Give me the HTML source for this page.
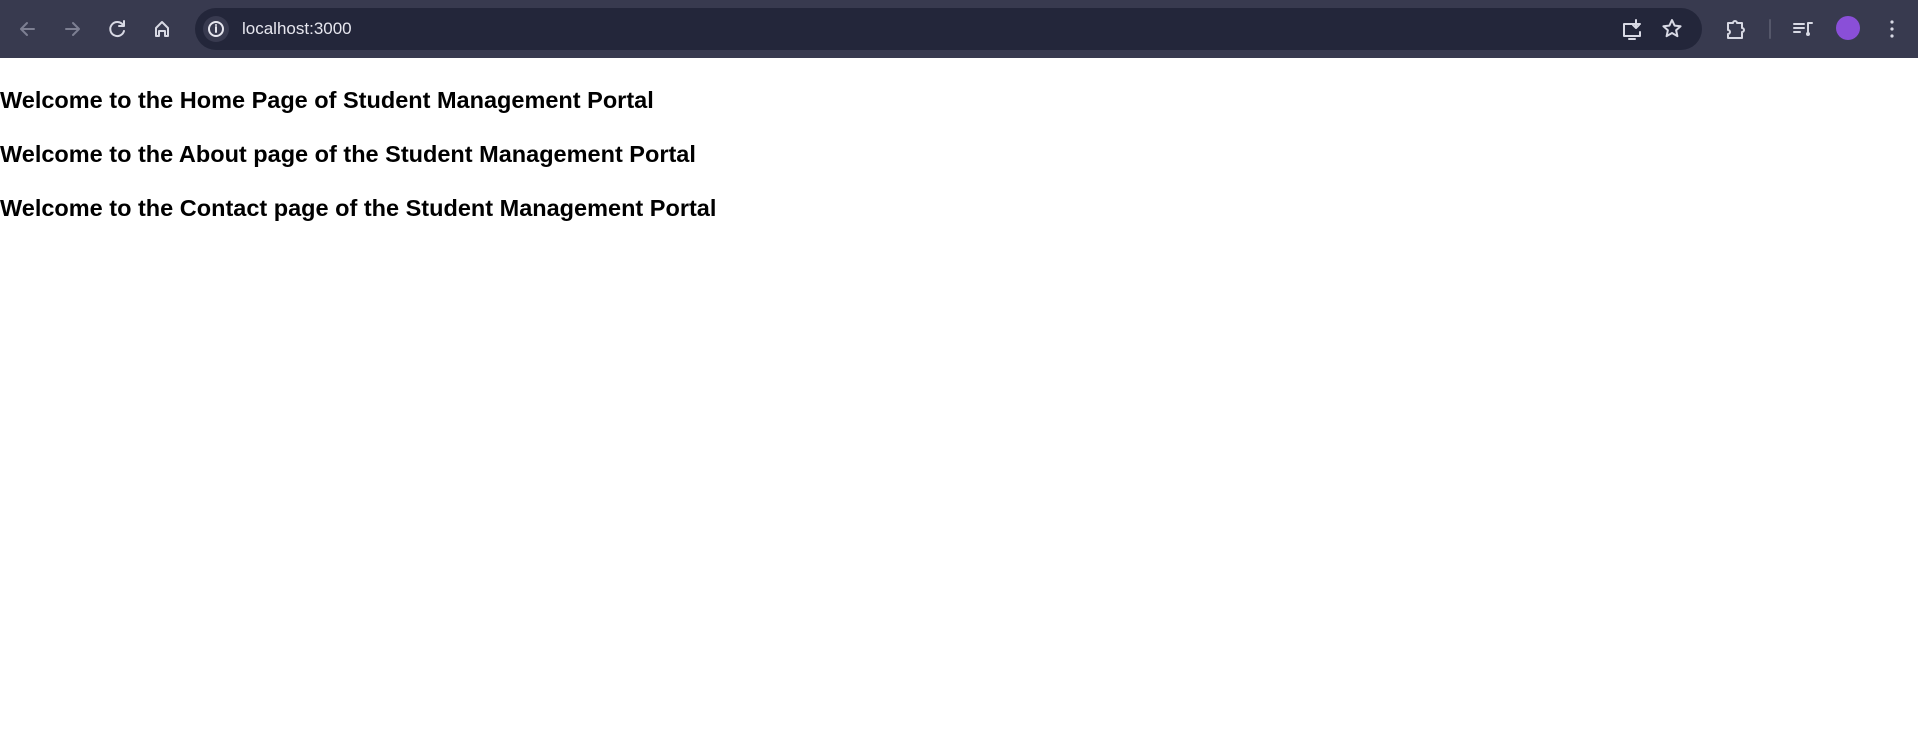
<!DOCTYPE html>
<html><head><meta charset="utf-8"><style>
html,body{margin:0;padding:0;width:1918px;height:753px;overflow:hidden;background:#fff}
.bar{position:absolute;left:0;top:0;width:1918px;height:58px;background:#383a4f}
.omni{position:absolute;left:195px;top:8px;width:1507px;height:42px;border-radius:21px;background:#23263a}
.url{position:absolute;left:242px;top:19px;font:17px/20px "Liberation Sans",sans-serif;color:#e6e6ee}
svg{position:absolute}
h3{position:absolute;left:0;margin:0;font:bold 23.5px/28px "Liberation Sans",sans-serif;color:#000;white-space:nowrap}
</style></head><body>
<div class="bar"></div>
<div class="omni"></div>
<svg width="1918" height="58" style="left:0;top:0" fill="none" stroke-width="2" stroke-linecap="round" stroke-linejoin="round">
<path d="M34 29H21M27 23l-6 6 6 6" stroke="#7d7f92"/>
<path d="M66 29h13M73 23l6 6-6 6" stroke="#7d7f92"/>
<path d="M123 25a7 7 0 1 0 1 6M124 21v5h-5" stroke="#d8d9e4"/>
<path d="M156 36v-8l6-6 6 6v8h-3v-5h-6v5z" stroke="#d8d9e4"/>
<circle cx="216" cy="29" r="13" fill="#383a4f" stroke="none"/>
<circle cx="216" cy="29" r="7" stroke="#e6e6ee"/>
<path d="M216 27v5M216 25v0" stroke="#e6e6ee"/>
<path d="M1640 24h-16v12h16v-4M1629 39h6M1636 20v8M1633 25l3 3 3-3" stroke="#d8d9e4"/>
<path d="M1672 20l2.6 5.6 6 .6-4.5 4 1.3 6-5.4-3.2-5.4 3.2 1.3-6-4.5-4 6-.6z" stroke="#d8d9e4"/>
<path d="M1728 23h5a2 2 0 0 1 4 0h5v5a2 2 0 0 1 0 4v6h-14v-4a2 2 0 0 0 0-4z" stroke="#d8d9e4"/>
<path d="M1770 20v18" stroke="#55576a"/>
<path d="M1794 24h10M1794 28h10M1794 32h6M1808 34v-11h4" stroke="#d8d9e4"/>
<circle cx="1808" cy="34" r="2" fill="#d8d9e4" stroke="none"/>
<circle cx="1848" cy="28" r="12" fill="#8a4fd8" stroke="none"/>
<circle cx="1892" cy="22" r="1.6" fill="#d8d9e4" stroke="none"/>
<circle cx="1892" cy="29" r="1.6" fill="#d8d9e4" stroke="none"/>
<circle cx="1892" cy="36" r="1.6" fill="#d8d9e4" stroke="none"/>
</svg>
<div class="url">localhost:3000</div>
<h3 style="top:86px">Welcome to the Home Page of Student Management Portal</h3>
<h3 style="top:140px">Welcome to the About page of the Student Management Portal</h3>
<h3 style="top:194px">Welcome to the Contact page of the Student Management Portal</h3>
</body></html>
